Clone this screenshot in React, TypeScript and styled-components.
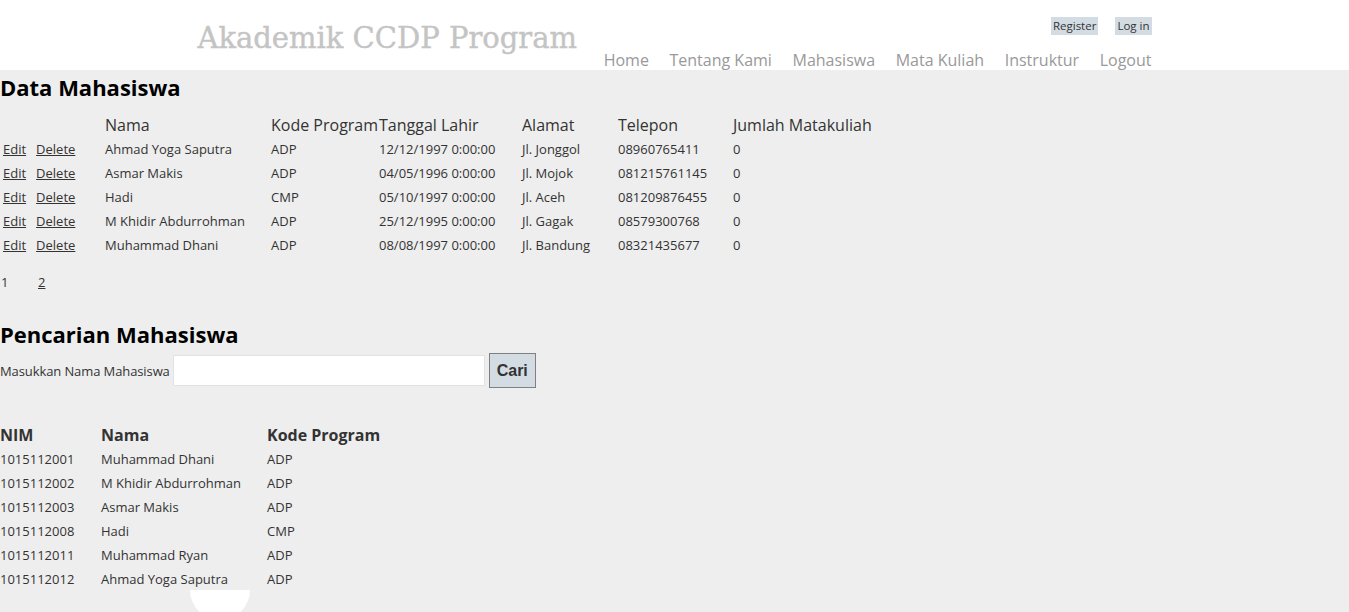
import React from "react";
import styled, { createGlobalStyle } from "styled-components";

const Global = createGlobalStyle`
  html, body { margin: 0; padding: 0; background: #eeeeee; }
  body { font-family: "Open Sans", "Noto Sans", sans-serif; color: #333; }
`;

const Page = styled.div`
  position: relative;
  min-height: 612px;
  background: #eeeeee;
  overflow: hidden;
`;

const Header = styled.header`
  background: #ffffff;
  height: 70px;
`;

const HeaderInner = styled.div`
  width: 960px;
  margin: 0 auto;
  display: flex;
  justify-content: space-between;
  height: 70px;
`;

const SiteTitle = styled.div`
  font-family: "DejaVu Serif", "Liberation Serif", serif;
  color: #c4c4c4;
  font-size: 29px;
  font-weight: 500;
  -webkit-text-stroke: 0.4px #c4c4c4;
  padding: 20px 0 0 3px;
  line-height: 36px;
`;

const HeaderRight = styled.div`
  display: flex;
  flex-direction: column;
  align-items: flex-end;
  padding-top: 17px;
  padding-right: 3px;
`;

const LoginBar = styled.div`
  display: flex;
  gap: 17px;
`;

const LoginLink = styled.a`
  background: #d3dce3;
  color: #333;
  font-size: 11.5px;
  line-height: 18px;
  height: 18px;
  padding: 0 2px;
  text-decoration: none;
`;

const Nav = styled.nav`
  display: flex;
  gap: 20.6px;
  margin-top: 14px;
`;

const NavLink = styled.a`
  color: #999;
  font-size: 16px;
  line-height: 22px;
  text-decoration: none;
`;

const Main = styled.main`
  padding: 0;
`;

const Heading = styled.h2<{ $top: number }>`
  margin: ${(p) => p.$top}px 0 0 0;
  font-size: 22px;
  line-height: 26px;
  font-weight: 700;
  color: #000;
`;

const Table = styled.table`
  border-collapse: collapse;
  table-layout: fixed;
`;

const Th = styled.th<{ $w: number; $bold?: boolean }>`
  width: ${(p) => p.$w}px;
  text-align: left;
  font-size: 16px;
  font-weight: ${(p) => (p.$bold ? 700 : 400)};
  color: #333;
  height: 24px;
  padding: 0;
  white-space: nowrap;
`;

const Td = styled.td<{ $pl?: number }>`
  font-size: 13px;
  color: #333;
  height: 24px;
  padding: 0 0 0 ${(p) => p.$pl || 0}px;
  white-space: nowrap;
`;

const RowLink = styled.a<{ $ml?: number }>`
  color: #333;
  text-decoration: underline;
  margin-left: ${(p) => p.$ml || 0}px;
`;

const Pager = styled.div`
  display: flex;
  font-size: 13px;
  line-height: 24px;
  margin-top: 13px;
  padding-left: 1px;
`;

const PageItem = styled.span<{ $link?: boolean }>`
  width: 37px;
  text-decoration: ${(p) => (p.$link ? "underline" : "none")};
`;

const SearchRow = styled.div`
  display: flex;
  align-items: center;
  margin-top: 6px;
  height: 35px;
`;

const SearchLabel = styled.label`
  font-size: 13px;
  letter-spacing: -0.1px;
  margin-right: 3px;
`;

const SearchInput = styled.input`
  width: 312px;
  height: 31px;
  box-sizing: border-box;
  border: 1px solid #e2e2e2;
  background: #fff;
  margin: 0 4px 0 0;
  padding: 0 4px;
`;

const SearchButton = styled.button`
  width: 47px;
  height: 35px;
  box-sizing: border-box;
  background: #d3dce3;
  border: 1px solid #808080;
  font-family: "Liberation Sans", Arial, sans-serif;
  font-weight: 700;
  font-size: 16px;
  color: #333;
  padding: 0;
`;

const Table2 = styled(Table)`
  margin-top: 35px;
`;

const Blob = styled.div`
  position: absolute;
  left: 190px;
  top: 590px;
  width: 60px;
  height: 30px;
  background: #fff;
  border-radius: 0 0 30px 30px;
`;

const mahasiswa = [
  ["Ahmad Yoga Saputra", "ADP", "12/12/1997 0:00:00", "Jl. Jonggol", "08960765411", "0"],
  ["Asmar Makis", "ADP", "04/05/1996 0:00:00", "Jl. Mojok", "081215761145", "0"],
  ["Hadi", "CMP", "05/10/1997 0:00:00", "Jl. Aceh", "081209876455", "0"],
  ["M Khidir Abdurrohman", "ADP", "25/12/1995 0:00:00", "Jl. Gagak", "08579300768", "0"],
  ["Muhammad Dhani", "ADP", "08/08/1997 0:00:00", "Jl. Bandung", "08321435677", "0"],
];

const hasil = [
  ["1015112001", "Muhammad Dhani", "ADP"],
  ["1015112002", "M Khidir Abdurrohman", "ADP"],
  ["1015112003", "Asmar Makis", "ADP"],
  ["1015112008", "Hadi", "CMP"],
  ["1015112011", "Muhammad Ryan", "ADP"],
  ["1015112012", "Ahmad Yoga Saputra", "ADP"],
];

export default function App() {
  return (
    <Page>
      <Global />
      <Header>
        <HeaderInner>
          <SiteTitle>Akademik CCDP Program</SiteTitle>
          <HeaderRight>
            <LoginBar>
              <LoginLink>Register</LoginLink>
              <LoginLink>Log in</LoginLink>
            </LoginBar>
            <Nav>
              {["Home", "Tentang Kami", "Mahasiswa", "Mata Kuliah", "Instruktur", "Logout"].map((n) => (
                <NavLink key={n}>{n}</NavLink>
              ))}
            </Nav>
          </HeaderRight>
        </HeaderInner>
      </Header>
      <Main>
        <Heading $top={4}>Data Mahasiswa</Heading>
        <Table style={{ marginTop: 13 }}>
          <thead>
            <tr>
              <Th $w={105}></Th>
              <Th $w={166}>Nama</Th>
              <Th $w={108}>Kode Program</Th>
              <Th $w={143}>Tanggal Lahir</Th>
              <Th $w={96}>Alamat</Th>
              <Th $w={115}>Telepon</Th>
              <Th $w={145}>Jumlah Matakuliah</Th>
            </tr>
          </thead>
          <tbody>
            {mahasiswa.map((r) => (
              <tr key={r[0]}>
                <Td $pl={3}>
                  <RowLink>Edit</RowLink>
                  <RowLink $ml={10}>Delete</RowLink>
                </Td>
                {r.map((c, i) => (
                  <Td key={i}>{c}</Td>
                ))}
              </tr>
            ))}
          </tbody>
        </Table>
        <Pager>
          <PageItem>1</PageItem>
          <PageItem $link>2</PageItem>
        </Pager>
        <Heading $top={27}>Pencarian Mahasiswa</Heading>
        <SearchRow>
          <SearchLabel>Masukkan Nama Mahasiswa</SearchLabel>
          <SearchInput type="text" />
          <SearchButton>Cari</SearchButton>
        </SearchRow>
        <Table2>
          <thead>
            <tr>
              <Th $w={101} $bold>NIM</Th>
              <Th $w={166} $bold>Nama</Th>
              <Th $w={130} $bold>Kode Program</Th>
            </tr>
          </thead>
          <tbody>
            {hasil.map((r) => (
              <tr key={r[0]}>
                {r.map((c, i) => (
                  <Td key={i}>{c}</Td>
                ))}
              </tr>
            ))}
          </tbody>
        </Table2>
      </Main>
      <Blob />
    </Page>
  );
}
